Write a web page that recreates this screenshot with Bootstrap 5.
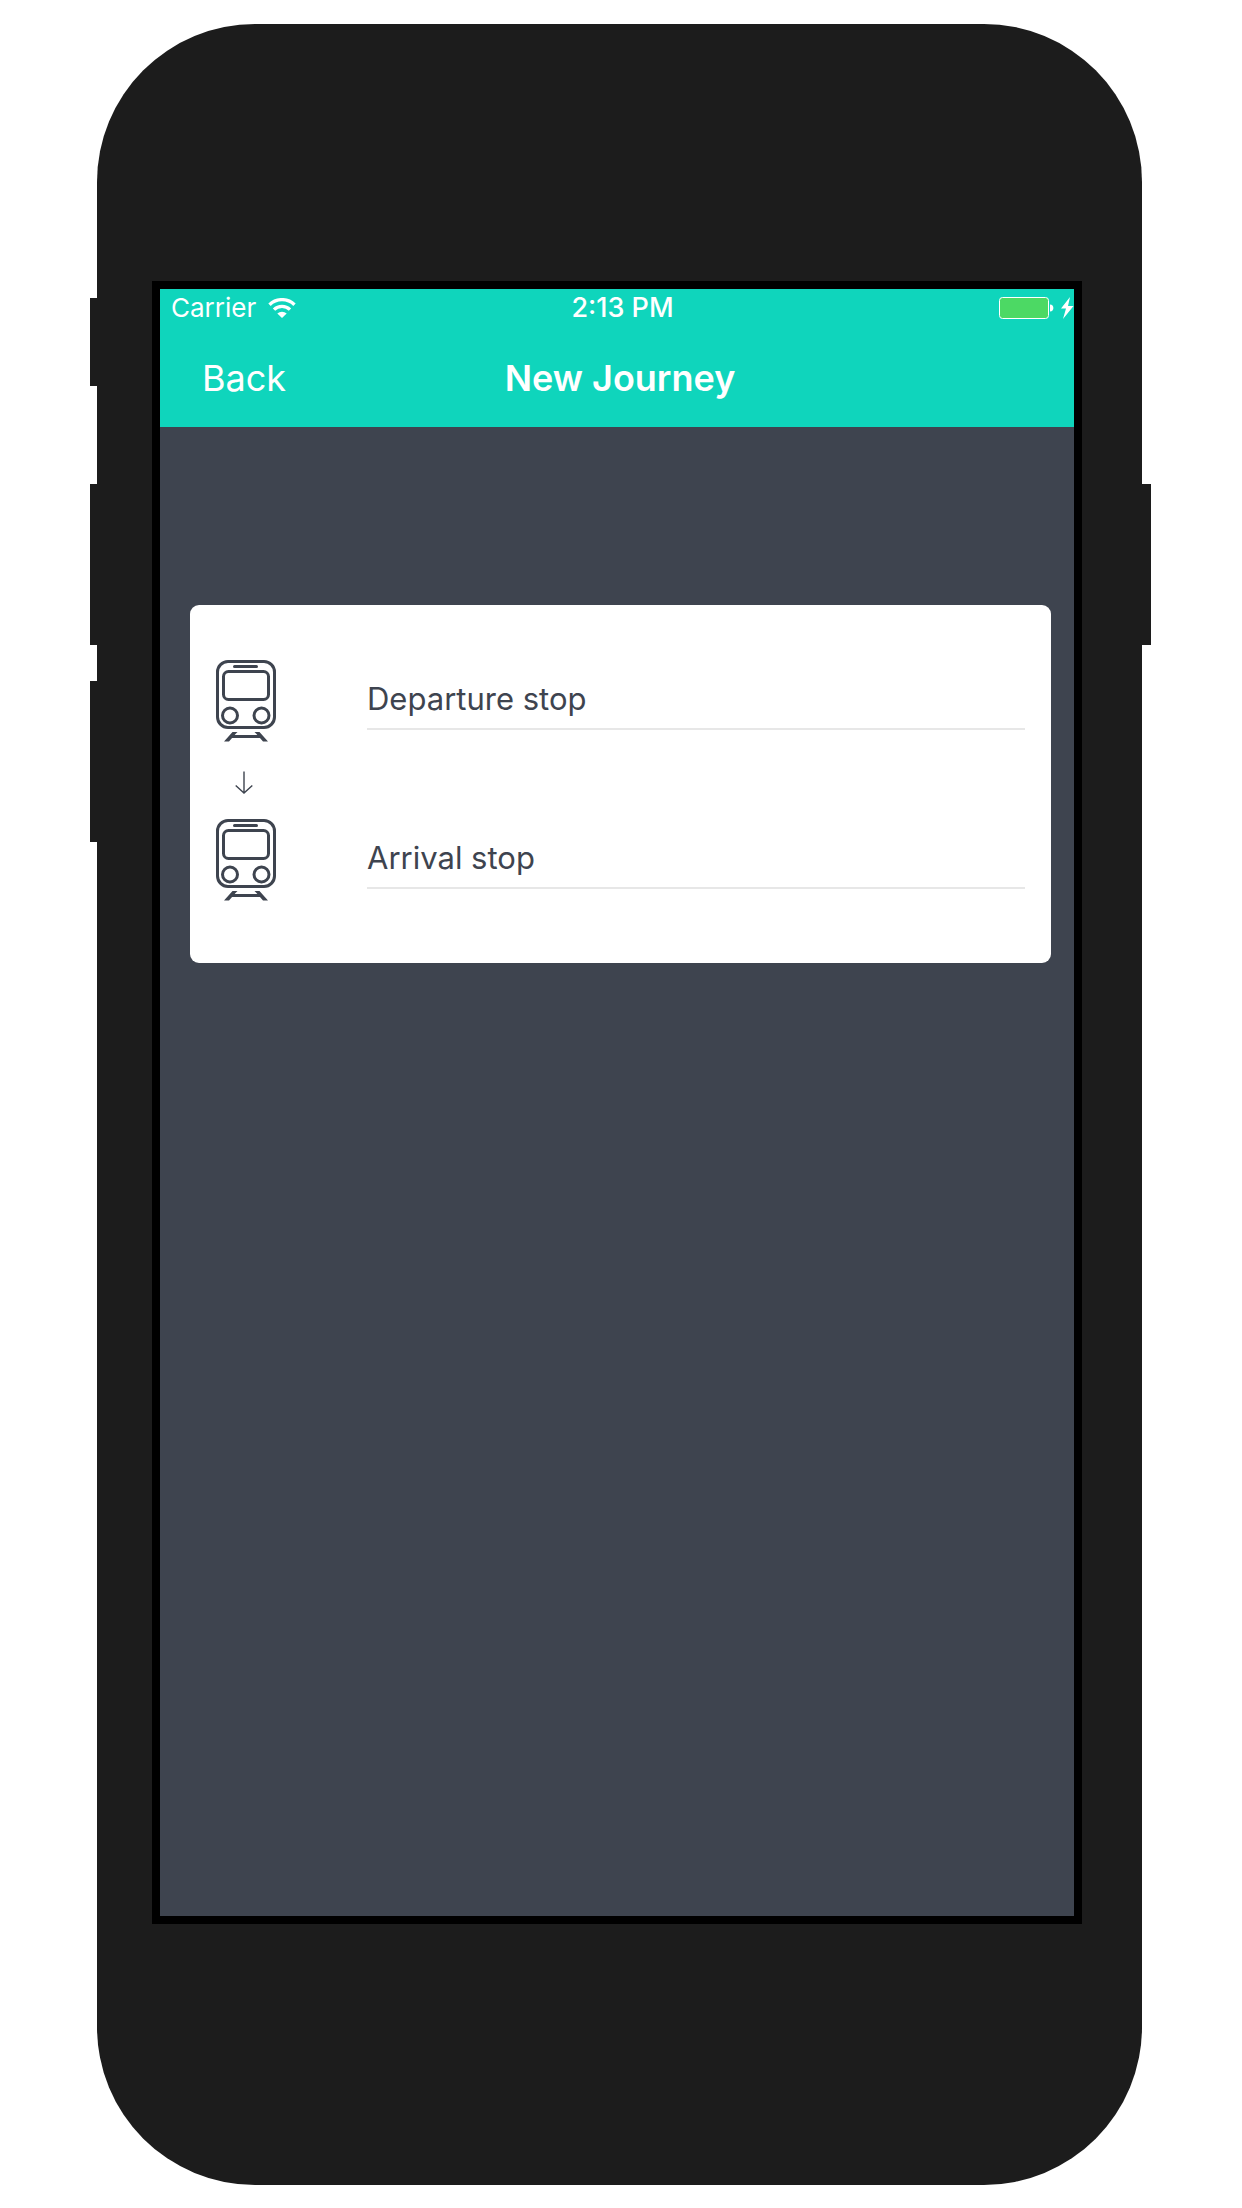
<!DOCTYPE html>
<html lang="en">
<head>
<meta charset="utf-8">
<meta name="viewport" content="width=device-width, initial-scale=1">
<title>New Journey</title>
<link href="https://cdn.jsdelivr.net/npm/bootstrap@5.3.0/dist/css/bootstrap.min.css" rel="stylesheet">
<style>
  :root { --teal: #0fd5bc; --slate: #3e444f; --shell: #1c1c1c; }
  body { font-family: Inter, "Liberation Sans", sans-serif; background: #fff; }
  .stage { min-height: 100vh; padding: 24px 100px 23px 97px; }
  .phone { background: var(--shell); border-radius: 158px; padding: 257px 60px 261px 55px; }
  .hw-key { position: absolute; width: 20px; background: var(--shell); }
  .key-left { left: -7px; }
  .key-right { right: -9px; top: 460px; height: 161px; }
  .key-mute { top: 274px; height: 88px; }
  .key-up { top: 460px; height: 161px; }
  .key-down { top: 657px; height: 161px; }
  .display { border: 8px solid #000; background: var(--slate); }
  .app-header { background: var(--teal); }
  .status-bar, .title-bar { display: grid; grid-template-columns: 1fr auto 1fr; align-items: center; }
  .status-bar { height: 37px; padding-left: 11px; font-size: 26px; line-height: 37px; }
  .clock { font-size: 27px; font-weight: 500; }
  .title-bar { height: 101px; padding: 3px 36px 0 42px; }
  .title-bar a, .title-bar h1 { font-size: 36px; line-height: 44px; }
  .title-bar h1 { font-weight: 600; }
  .journey { margin: 178px 23px 0 30px; padding: 55px 26px 62px; border-radius: 9px; }
  .stop-row { gap: 91px; }
  .stop-icon { flex: none; line-height: 0; }
  .arrow-row { width: 55px; padding: 29px 0 24px; }
  .stop-input { font-size: 31px; line-height: 36px; height: 70px; padding: 20px 0 12px; border: 0; border-bottom: 2px solid #e7e7e7; border-radius: 0; color: var(--slate); }
  .stop-input::placeholder { color: var(--slate); opacity: 1; }
</style>
<script src="https://cdn.jsdelivr.net/npm/bootstrap@5.3.0/dist/js/bootstrap.bundle.min.js"></script>
</head>
<body>
<svg class="d-none" aria-hidden="true">
  <symbol id="train" viewBox="0 0 60 82">
    <g fill="none" stroke="#3e444f" stroke-width="3">
      <rect x="1.5" y="1.5" width="57" height="66" rx="10.5"/>
      <rect x="7.5" y="11.5" width="45" height="28" rx="5"/>
      <path d="M18.500 6.500h22" stroke-linecap="round"/>
      <circle cx="14" cy="55.500" r="7.500"/>
      <circle cx="45.500" cy="55.500" r="7.500"/>
      <path d="M15 76.500h29"/>
    </g>
    <path d="M16.500 72h5l-2 2-6.500 7.500H8zM43.500 72h-5l2 2 6.500 7.500h5z" fill="#3e444f"/>
  </symbol>
</svg>
<main class="stage d-flex">
  <div class="phone position-relative d-flex flex-column w-100">
    <span class="hw-key key-left key-mute"></span>
    <span class="hw-key key-left key-up"></span>
    <span class="hw-key key-left key-down"></span>
    <span class="hw-key key-right"></span>
    <div class="display position-relative flex-grow-1">
      <header class="app-header text-white">
        <div class="status-bar">
          <div class="d-flex align-items-center gap-2">
            <span>Carrier</span>
            <svg class="ms-1" width="28" height="20" viewBox="0 0 28 20" role="img" aria-label="Wi-Fi">
              <g fill="none" stroke="#fff" stroke-width="3.400">
                <path d="M1.500 6.700a18 18 0 0 1 25 0"/>
                <path d="M6 11.600a11.500 11.500 0 0 1 16 0"/>
              </g>
              <path d="M9.300 15.500a7 7 0 0 1 9.400 0L14 20z" fill="#fff"/>
            </svg>
          </div>
          <span class="clock">2:13 PM</span>
          <div class="d-flex align-items-center justify-content-end">
            <svg width="75" height="22" viewBox="0 0 75 22" role="img" aria-label="Battery charging">
              <rect x=".5" y=".5" width="49" height="21" rx="3" fill="#4cd964" stroke="#fff"/>
              <path d="M51 7.500c4.500 0 4.500 7 0 7z" fill="#fff"/>
              <path d="M71 0L62 11.500h5L64 22 74.500 9h-5.500z" fill="#fff"/>
            </svg>
          </div>
        </div>
        <nav class="title-bar">
          <a href="#" class="text-white text-decoration-none">Back</a>
          <h1 class="mb-0">New Journey</h1>
        </nav>
      </header>
      <form class="journey bg-white">
        <div class="stop-row d-flex align-items-start">
          <label class="stop-icon" for="departure"><svg width="60" height="82" role="img" aria-label="Departure stop"><use href="#train"/></svg></label>
          <input class="stop-input form-control" id="departure" type="text" placeholder="Departure stop">
        </div>
        <div class="arrow-row d-flex justify-content-center">
          <svg width="18" height="24" viewBox="0 0 18 24" fill="none" stroke="#3e444f" stroke-width="1.400" aria-hidden="true"><path d="M9 .5V22M.7 14.500L9 22l8.300-7.500"/></svg>
        </div>
        <div class="stop-row d-flex align-items-start">
          <label class="stop-icon" for="arrival"><svg width="60" height="82" role="img" aria-label="Arrival stop"><use href="#train"/></svg></label>
          <input class="stop-input form-control" id="arrival" type="text" placeholder="Arrival stop">
        </div>
      </form>
    </div>
  </div>
</main>
</body>
</html>
